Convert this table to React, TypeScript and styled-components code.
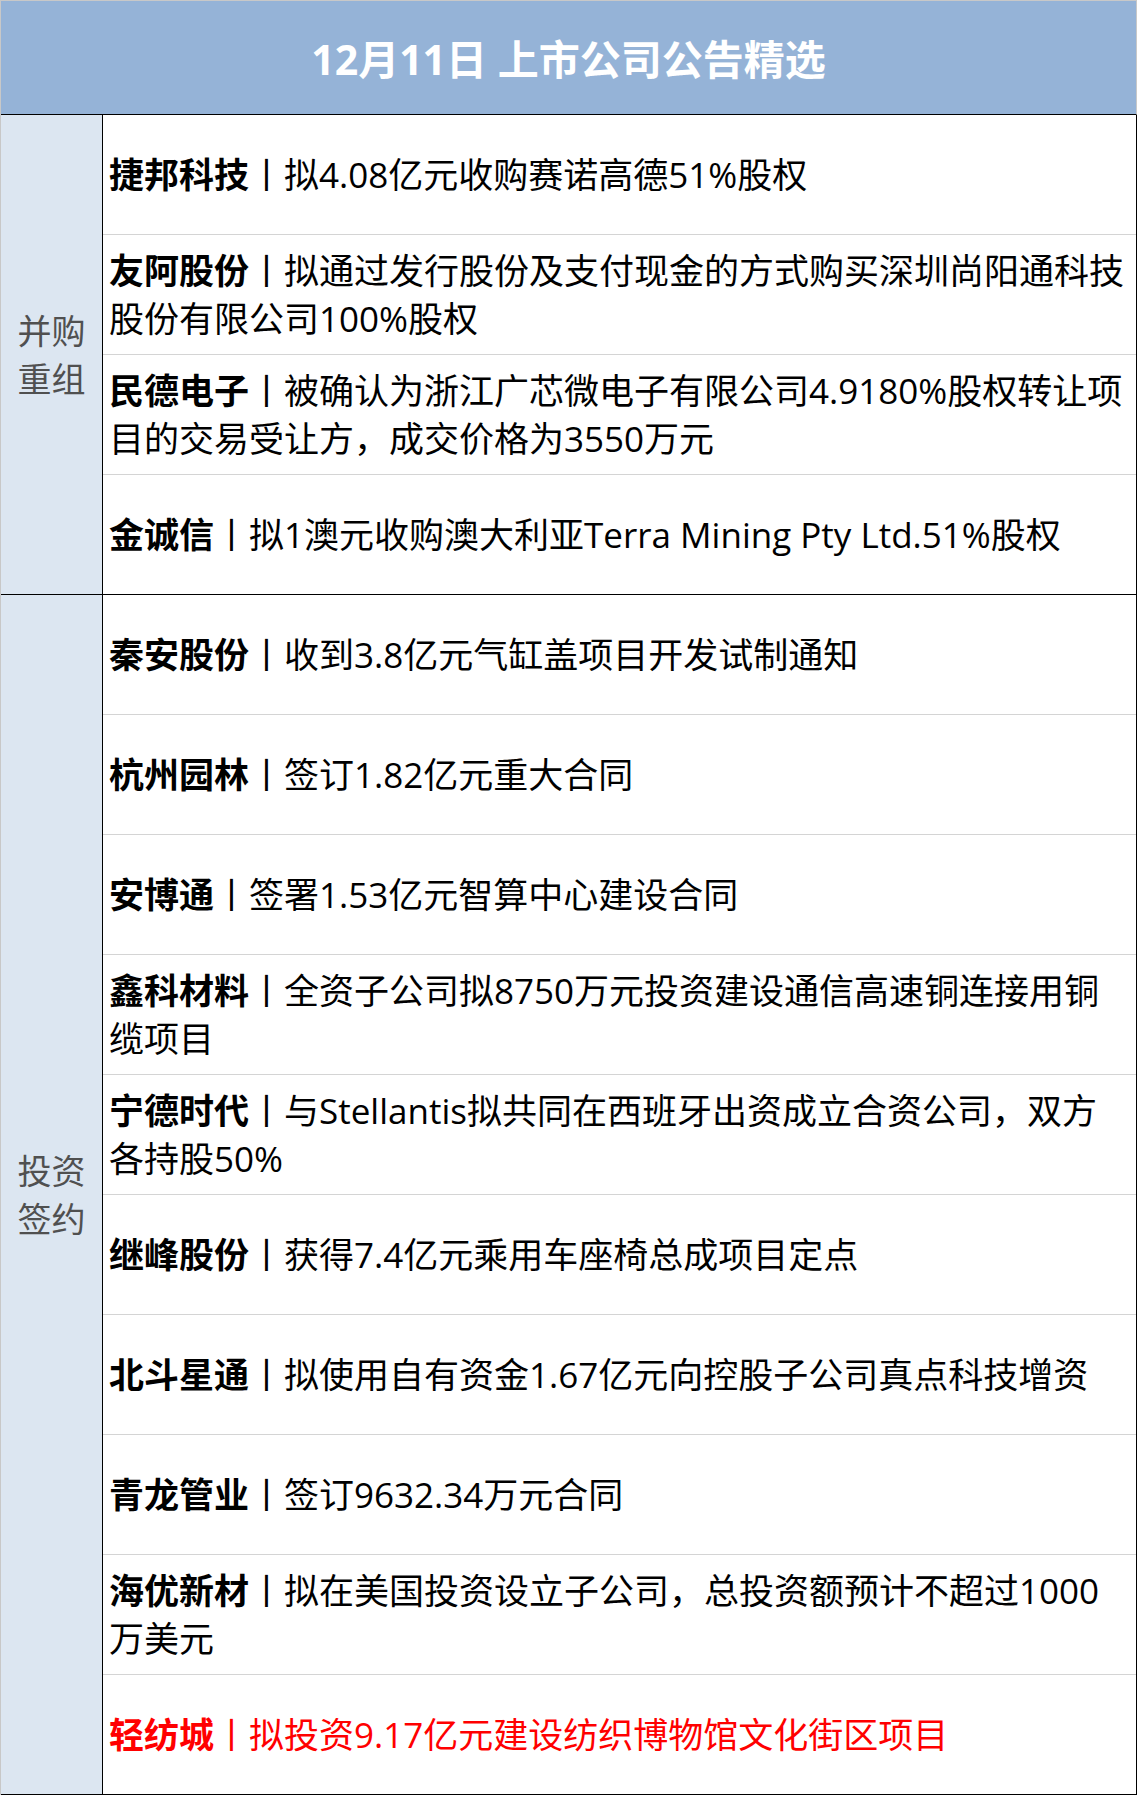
import React from "react";
import styled, { createGlobalStyle } from "styled-components";

const Global = createGlobalStyle`
  html, body { margin: 0; padding: 0; background: #ffffff; }
  body { font-family: "Open Sans", "Noto Sans CJK SC", sans-serif; }
`;

const Sheet = styled.div`
  width: 1137px;
  box-sizing: border-box;
  border-top: 1px solid #c8c8c8;
  border-left: 1px solid #c8c8c8;
  font-family: "Open Sans", "Noto Sans CJK SC", sans-serif;
`;

const Header = styled.div`
  height: 114px;
  box-sizing: border-box;
  background: #95b3d7;
  border-bottom: 1px solid #000000;
  border-right: 1px solid #c8c8c8;
  display: flex;
  align-items: center;
  justify-content: center;
  color: #ffffff;
  font-weight: 700;
  font-size: 41px;
  letter-spacing: 0;
  padding-bottom: 2px;
`;

const Section = styled.div`
  display: grid;
  grid-template-columns: 102px 1fr;
  border-bottom: 1px solid #000000;
`;

const Label = styled.div`
  background: #dce6f1;
  border-right: 1px solid #000000;
  display: flex;
  flex-direction: column;
  align-items: center;
  justify-content: center;
  color: #505050;
  font-size: 34px;
  line-height: 48px;
`;

const Rows = styled.div`
  display: flex;
  flex-direction: column;
  border-right: 1px solid #000000;
`;

const Row = styled.div<{ $red?: boolean }>`
  height: 120px;
  box-sizing: border-box;
  border-bottom: 1px solid #d4d4d4;
  display: flex;
  align-items: center;
  padding-left: 6px;
  overflow: hidden;
  color: ${(p) => (p.$red ? "#ff0000" : "#000000")};
  font-size: 35px;
  line-height: 48px;
  white-space: nowrap;
  &:last-child {
    border-bottom: none;
    height: 119px;
  }
`;

const Text = styled.div`
  padding-bottom: 2px;
`;

const Name = styled.span`
  font-weight: 700;
`;

const Sep = styled.span`
  font-weight: 400;
  font-family: "Noto Sans CJK SC", sans-serif;
`;

type Item = { name: string; lines: string[]; red?: boolean };

const merger: Item[] = [
  { name: "捷邦科技", lines: ["拟4.08亿元收购赛诺高德51%股权"] },
  { name: "友阿股份", lines: ["拟通过发行股份及支付现金的方式购买深圳尚阳通科技", "股份有限公司100%股权"] },
  { name: "民德电子", lines: ["被确认为浙江广芯微电子有限公司4.9180%股权转让项", "目的交易受让方，成交价格为3550万元"] },
  { name: "金诚信", lines: ["拟1澳元收购澳大利亚Terra Mining Pty Ltd.51%股权"] },
];

const invest: Item[] = [
  { name: "秦安股份", lines: ["收到3.8亿元气缸盖项目开发试制通知"] },
  { name: "杭州园林", lines: ["签订1.82亿元重大合同"] },
  { name: "安博通", lines: ["签署1.53亿元智算中心建设合同"] },
  { name: "鑫科材料", lines: ["全资子公司拟8750万元投资建设通信高速铜连接用铜", "缆项目"] },
  { name: "宁德时代", lines: ["与Stellantis拟共同在西班牙出资成立合资公司，双方", "各持股50%"] },
  { name: "继峰股份", lines: ["获得7.4亿元乘用车座椅总成项目定点"] },
  { name: "北斗星通", lines: ["拟使用自有资金1.67亿元向控股子公司真点科技增资"] },
  { name: "青龙管业", lines: ["签订9632.34万元合同"] },
  { name: "海优新材", lines: ["拟在美国投资设立子公司，总投资额预计不超过1000", "万美元"] },
  { name: "轻纺城", lines: ["拟投资9.17亿元建设纺织博物馆文化街区项目"], red: true },
];

const Block: React.FC<{ label: string[]; items: Item[] }> = ({ label, items }) => (
  <Section>
    <Label>
      {label.map((l) => (
        <div key={l}>{l}</div>
      ))}
    </Label>
    <Rows>
      {items.map((it) => (
        <Row key={it.name} $red={it.red}>
          <Text>
            <Name>{it.name}</Name>
            <Sep>丨</Sep>
            {it.lines[0]}
            {it.lines.slice(1).map((l) => (
              <React.Fragment key={l}>
                <br />
                {l}
              </React.Fragment>
            ))}
          </Text>
        </Row>
      ))}
    </Rows>
  </Section>
);

export default function App() {
  return (
    <>
      <Global />
      <Sheet>
        <Header>12月11日 上市公司公告精选</Header>
        <Block label={["并购", "重组"]} items={merger} />
        <Block label={["投资", "签约"]} items={invest} />
      </Sheet>
    </>
  );
}
